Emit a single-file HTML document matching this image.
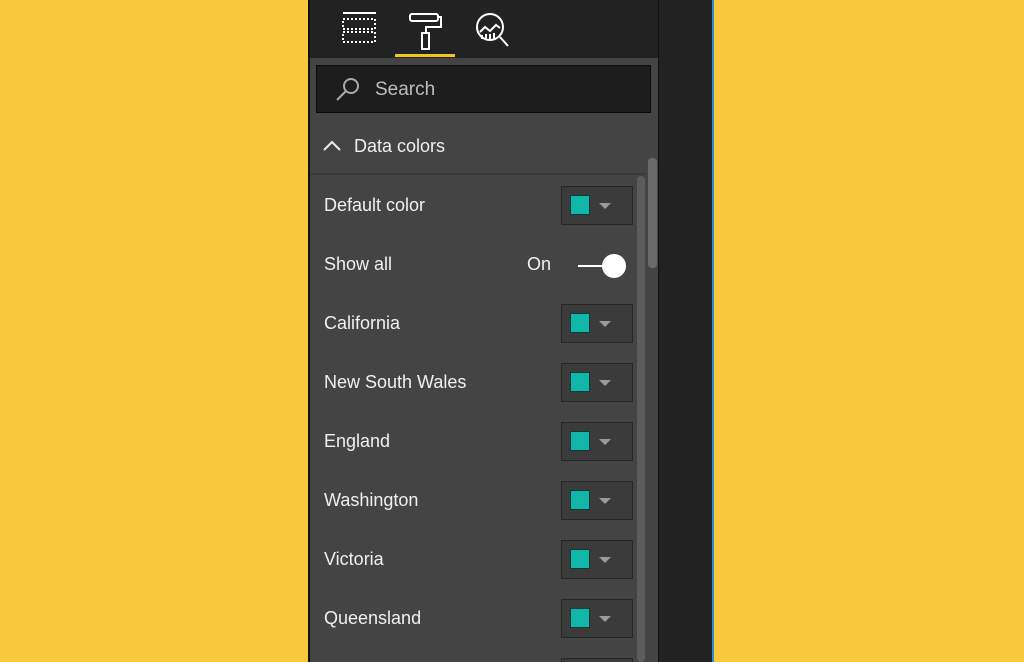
<!DOCTYPE html><html style="overflow:hidden;height:662px"><head><style>
body{margin:0;width:1024px;height:662px;background:#f7ca3d;position:relative;overflow:hidden;font-family:"Liberation Sans",sans-serif;}
.p{position:absolute}
.lbl{position:absolute;left:324px;color:#f0f0f0;font-size:18px;}
.btn{position:absolute;left:561px;width:70px;height:37px;background:#3b3b3b;border:1px solid #262626;}
.sw{position:absolute;left:8px;top:8px;width:18px;height:18px;background:#13b7aa;border:1px solid #0b3b37;}
.ar{position:absolute;left:37px;top:16px;width:0;height:0;border-left:6px solid transparent;border-right:6px solid transparent;border-top:6px solid #9a9a9a;}
</style></head><body>
<div class="p" style="left:308px;top:0;width:350px;height:662px;background:#444;"></div>
<div class="p" style="left:308px;top:0;width:2px;height:662px;background:#111;"></div>
<div class="p" style="left:310px;top:0;width:348px;height:58px;background:#222;"></div>
<div class="p" style="left:658px;top:0;width:54px;height:662px;background:#222;border-left:1px solid #111;box-sizing:border-box;"></div>
<div class="p" style="left:712px;top:0;width:2px;height:662px;background:#2a8fd6;"></div>
<div class="p" style="left:395px;top:54px;width:60px;height:3px;background:#f2c811;"></div>
<svg class="p" style="left:330px;top:5px" width="190" height="50" fill="none" stroke="#fff" stroke-width="2">
<line x1="13" y1="8" x2="46" y2="8"/>
<rect x="13" y="14" width="32" height="10" stroke-dasharray="2 2"/>
<rect x="13" y="27" width="32" height="10" stroke-dasharray="2 2"/>
<rect x="80" y="9" width="28" height="7" rx="2"/><path d="M108 12h3v10h-15v6"/>
<rect x="92" y="28" width="7" height="16"/>
<circle cx="160" cy="22" r="13"/><path d="M150 27l5-5 5 4 6-6 4 3M152 30v4M156 29v6M160 29v6M164 28v6M170 32l8 9"/>
</svg>
<div class="p" style="left:316px;top:65px;width:333px;height:46px;background:#1d1d1d;border:1px solid #0a0a0a;"></div>
<svg class="p" style="left:334px;top:76px" width="28" height="28" fill="none" stroke="#aaa" stroke-width="2"><circle cx="17" cy="10" r="7"/><line x1="12" y1="15" x2="3" y2="24"/></svg>
<div class="p" style="left:375px;top:79px;color:#bdbdbd;font-size:19px;">Search</div>
<svg class="p" style="left:322px;top:139px" width="20" height="14" fill="none" stroke="#eee" stroke-width="2"><path d="M2 11l8-8 8 8"/></svg>
<div class="p" style="left:354px;top:136px;color:#f0f0f0;font-size:18px;">Data colors</div>
<div class="p" style="left:310px;top:173px;width:336px;height:2px;background:#3a3a3a;"></div>
<div class="p" style="left:637px;top:176px;width:8px;height:486px;background:#5c5c5c;border-radius:4px;"></div>
<div class="p" style="left:648px;top:158px;width:9px;height:110px;background:#6a6a6a;border-radius:4px;"></div>
<div class="lbl" style="top:195px">Default color</div><div class="btn" style="top:186px"><div class="sw"></div><div class="ar"></div></div>
<div class="lbl" style="top:254px">Show all</div>
<div class="p" style="left:527px;top:254px;color:#f0f0f0;font-size:18px;">On</div>
<div class="p" style="left:578px;top:265px;width:28px;height:2px;background:#fff;"></div>
<div class="p" style="left:602px;top:254px;width:24px;height:24px;border-radius:50%;background:#fff;"></div>
<div class="lbl" style="top:313px">California</div><div class="btn" style="top:304px"><div class="sw"></div><div class="ar"></div></div>
<div class="lbl" style="top:372px">New South Wales</div><div class="btn" style="top:363px"><div class="sw"></div><div class="ar"></div></div>
<div class="lbl" style="top:431px">England</div><div class="btn" style="top:422px"><div class="sw"></div><div class="ar"></div></div>
<div class="lbl" style="top:490px">Washington</div><div class="btn" style="top:481px"><div class="sw"></div><div class="ar"></div></div>
<div class="lbl" style="top:549px">Victoria</div><div class="btn" style="top:540px"><div class="sw"></div><div class="ar"></div></div>
<div class="lbl" style="top:608px">Queensland</div><div class="btn" style="top:599px"><div class="sw"></div><div class="ar"></div></div>
<div class="btn" style="top:658px;height:3px;border-bottom:none"></div>
</body></html>
